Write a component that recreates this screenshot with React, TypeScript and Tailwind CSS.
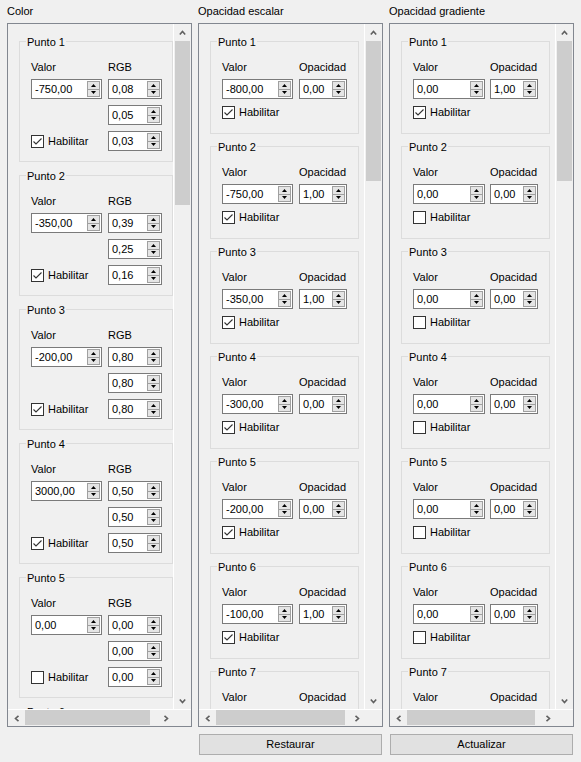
import type { JSX } from "react";

type ColorPoint = { valor: string; rgb: [string, string, string]; on: boolean };
type OpPoint = { valor: string; op: string; on: boolean };

const colorPoints: ColorPoint[] = [
	{ valor: "-750,00", rgb: ["0,08", "0,05", "0,03"], on: true },
	{ valor: "-350,00", rgb: ["0,39", "0,25", "0,16"], on: true },
	{ valor: "-200,00", rgb: ["0,80", "0,80", "0,80"], on: true },
	{ valor: "3000,00", rgb: ["0,50", "0,50", "0,50"], on: true },
	{ valor: "0,00", rgb: ["0,00", "0,00", "0,00"], on: false },
	{ valor: "0,00", rgb: ["0,00", "0,00", "0,00"], on: false },
];

const escalar: OpPoint[] = [
	{ valor: "-800,00", op: "0,00", on: true },
	{ valor: "-750,00", op: "1,00", on: true },
	{ valor: "-350,00", op: "1,00", on: true },
	{ valor: "-300,00", op: "0,00", on: true },
	{ valor: "-200,00", op: "0,00", on: true },
	{ valor: "-100,00", op: "1,00", on: true },
	{ valor: "0,00", op: "0,00", on: false },
];

const gradiente: OpPoint[] = [
	{ valor: "0,00", op: "1,00", on: true },
	{ valor: "0,00", op: "0,00", on: false },
	{ valor: "0,00", op: "0,00", on: false },
	{ valor: "0,00", op: "0,00", on: false },
	{ valor: "0,00", op: "0,00", on: false },
	{ valor: "0,00", op: "0,00", on: false },
	{ valor: "0,00", op: "0,00", on: false },
];

function Spin({ value, w }: { value: string; w: string }): JSX.Element {
	return (
		<div className={`flex h-[20px] items-center border border-[#7a7a7a] bg-white ${w}`}>
			<span className="flex-1 pl-[3px] leading-[13px]">{value}</span>
			<span className="mr-[1px] flex h-[16px] w-[13px] flex-col border border-[#a0a0a0] bg-[#e5e5e5]">
				<span className="flex flex-1 items-center justify-center border-b border-[#a0a0a0]">
					<svg width="5" height="3" viewBox="0 0 5 3">
						<polygon points="0,3 2.5,0 5,3" fill="#000" />
					</svg>
				</span>
				<span className="flex flex-1 items-center justify-center">
					<svg width="5" height="3" viewBox="0 0 5 3">
						<polygon points="0,0 5,0 2.5,3" fill="#000" />
					</svg>
				</span>
			</span>
		</div>
	);
}

function Check({ on }: { on: boolean }): JSX.Element {
	return (
		<div className="flex h-[13px] items-center gap-[4px]">
			<span className="flex h-[13px] w-[13px] items-center justify-center border border-[#333333] bg-white">
				{on && (
					<svg width="11" height="11" viewBox="0 0 11 11">
						<path d="M1.5 5.5 L4 8 L9.5 2.5" fill="none" stroke="#333333" strokeWidth="1.1" />
					</svg>
				)}
			</span>
			<span className="leading-[13px]">Habilitar</span>
		</div>
	);
}

function Group({
	title,
	className,
	children,
}: {
	title: string;
	className: string;
	children: React.ReactNode;
}): JSX.Element {
	return (
		<div className={`relative shrink-0 border border-[#dcdcdc] pt-[19px] pl-[11px] ${className}`}>
			<span className="absolute top-[-6px] left-[6px] bg-[#f0f0f0] px-[1px] leading-[13px]">
				{title}
			</span>
			{children}
		</div>
	);
}

function Chevron({ dir }: { dir: "up" | "down" | "left" | "right" }): JSX.Element {
	const pts = {
		up: "0.8,4.5 3.5,1.5 6.2,4.5",
		down: "0.8,1.5 3.5,4.5 6.2,1.5",
		left: "4.5,0.8 1.5,3.5 4.5,6.2",
		right: "1.5,0.8 4.5,3.5 1.5,6.2",
	}[dir];
	const vert = dir === "up" || dir === "down";
	return (
		<svg width={vert ? 7 : 6} height={vert ? 6 : 7} viewBox={vert ? "0 0 7 6" : "0 0 6 7"}>
			<polyline points={pts} fill="none" stroke="#606060" strokeWidth="1.6" />
		</svg>
	);
}

function Panel({
	title,
	thumbV,
	thumbH,
	children,
}: {
	title: string;
	thumbV: string;
	thumbH: string;
	children: React.ReactNode;
}): JSX.Element {
	return (
		<>
			<div className="h-[23px] pt-[5px] leading-[13px]">{title}</div>
			<div className="flex h-[704px] flex-col border border-[#828790]">
				<div className="flex min-h-0 flex-1">
					<div className="flex min-w-0 flex-1 flex-col overflow-hidden border-r border-white pt-[17px] pl-[11px]">
						{children}
					</div>
					<div className="flex w-[17px] flex-col">
						<div className="flex h-[17px] items-center justify-center">
							<Chevron dir="up" />
						</div>
						<div className="flex-1 px-[1px]">
							<div className={`bg-[#cdcdcd] ${thumbV}`} />
						</div>
						<div className="flex h-[17px] items-center justify-center">
							<Chevron dir="down" />
						</div>
					</div>
				</div>
				<div className="flex h-[17px] border-t border-white">
					<div className="flex flex-1">
						<div className="flex w-[17px] items-center justify-center">
							<Chevron dir="left" />
						</div>
						<div className="flex-1 pb-[1px]">
							<div className={`h-full bg-[#cdcdcd] ${thumbH}`} />
						</div>
						<div className="flex w-[17px] items-center justify-center">
							<Chevron dir="right" />
						</div>
					</div>
					<div className="w-[17px]" />
				</div>
			</div>
		</>
	);
}

function Button({ label }: { label: string }): JSX.Element {
	return (
		<div className="mx-[1px] mt-[7px] flex h-[21px] items-center justify-center border border-[#adadad] bg-[#e1e1e1] leading-[13px]">
			{label}
		</div>
	);
}

function OpGroups({
	points,
	wValor,
	gap,
}: {
	points: OpPoint[];
	wValor: string;
	gap: string;
}): JSX.Element {
	return (
		<div className="flex flex-col gap-[12px]">
			{points.map((p, i) => (
				<Group key={i} title={`Punto ${i + 1}`} className="h-[93px] w-[149px]">
					<div className={`flex h-[18px] ${gap}`}>
						<span className={`leading-[13px] ${wValor}`}>Valor</span>
						<span className="leading-[13px]">Opacidad</span>
					</div>
					<div className={`flex ${gap}`}>
						<Spin value={p.valor} w={wValor} />
						<Spin value={p.op} w="w-[48px]" />
					</div>
					<div className="mt-[7px]">
						<Check on={p.on} />
					</div>
				</Group>
			))}
		</div>
	);
}

export default function App(): JSX.Element {
	return (
		<div
			className="flex h-[762px] w-[581px] gap-[6px] bg-[#f0f0f0] pl-[7px] text-[11px] text-black"
			style={{ fontFamily: '"Liberation Sans", Arial, sans-serif' }}
		>
			<div className="flex w-[185px] flex-col">
				<Panel title="Color" thumbV="h-[164px]" thumbH="w-[125px]">
					<div className="flex flex-col gap-[13px]">
						{colorPoints.map((p, i) => (
							<Group key={i} title={`Punto ${i + 1}`} className="h-[121px] w-[154px]">
								<div className="grid grid-cols-[71px_54px] items-center gap-x-[6px] gap-y-[6px]">
									<span className="-mb-[6px] h-[18px] leading-[13px]">Valor</span>
									<span className="-mb-[6px] h-[18px] leading-[13px]">RGB</span>
									<Spin value={p.valor} w="w-[71px]" />
									<Spin value={p.rgb[0]} w="w-[54px]" />
									<span />
									<Spin value={p.rgb[1]} w="w-[54px]" />
									<Check on={p.on} />
									<Spin value={p.rgb[2]} w="w-[54px]" />
								</div>
							</Group>
						))}
					</div>
				</Panel>
			</div>
			<div className="flex w-[185px] flex-col">
				<Panel title="Opacidad escalar" thumbV="h-[140px]" thumbH="w-[129px]">
					<OpGroups points={escalar} wValor="w-[71px]" gap="gap-[6px]" />
				</Panel>
				<Button label="Restaurar" />
			</div>
			<div className="flex w-[185px] flex-col">
				<Panel title="Opacidad gradiente" thumbV="h-[140px]" thumbH="w-[128px]">
					<OpGroups points={gradiente} wValor="w-[72px]" gap="gap-[5px]" />
				</Panel>
				<Button label="Actualizar" />
			</div>
		</div>
	);
}
